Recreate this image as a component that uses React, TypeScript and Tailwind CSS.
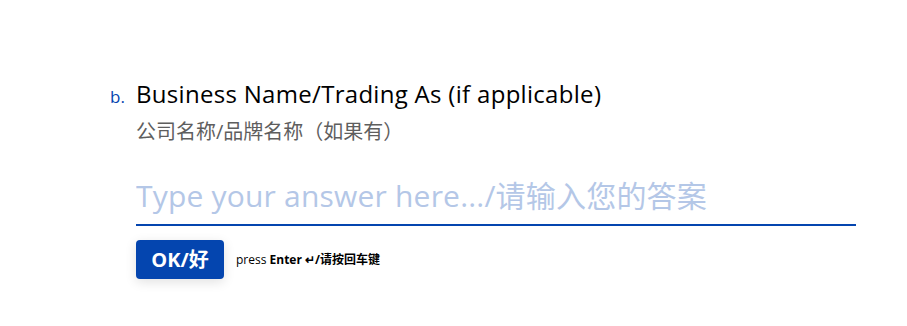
const font = 'font-["Open_Sans","Noto_Sans_CJK_SC",sans-serif]';

export default function App() {
  return (
    <div className={`w-full h-[326px] bg-white pt-[78px] pl-[110px] ${font}`}>
      <div className="flex items-baseline">
        <div className="w-[26px] shrink-0 text-[17px] leading-[24px] text-[#0445af]">b.</div>
        <div className="w-[720px] flex flex-col">
          <h1 className="text-[24px] leading-[32px] text-black tracking-[0.3px]">
            Business Name/Trading As (if applicable)
          </h1>
          <p className="mt-[8px] text-[20px] leading-[28px] text-[#5e5e5e]">公司名称/品牌名称（如果有）</p>

          <div className="mt-[32px] border-b-2 border-[#0445af] pb-[10px]">
            <input
              type="text"
              placeholder="Type your answer here.../请输入您的答案"
              className="w-full bg-transparent text-[30px] leading-[36px] h-[36px] text-[#0445af] placeholder:text-[#b4c7e7] outline-none tracking-[0.2px]"
            />
          </div>

          <div className="mt-[14px] flex items-center gap-[12px]">
            <button className="w-[88px] h-[39px] rounded-[4px] bg-[#0445af] text-white text-[20px] font-bold flex items-center justify-center shadow-[0_3px_12px_0_rgba(0,0,0,0.12)]">
              OK/好
            </button>
            <div className="text-[12px] leading-[16px] text-black whitespace-nowrap">
              press <span className="font-bold">Enter ↵/请按回车键</span>
            </div>
          </div>
        </div>
      </div>
    </div>
  );
}
